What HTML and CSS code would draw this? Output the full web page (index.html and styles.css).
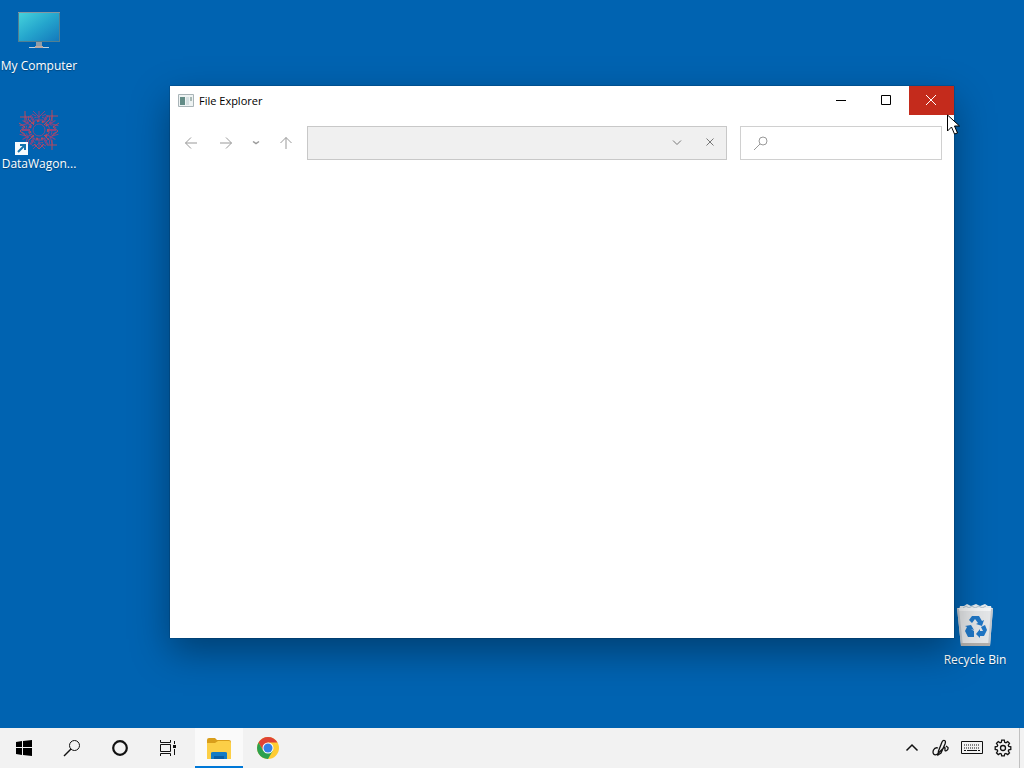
FILE: index.html
```html
<!DOCTYPE html>
<html lang="en">
<head>
<meta charset="utf-8">
<title>File Explorer</title>
<link rel="stylesheet" href="styles.css">
</head>
<body>
<main class="desktop">
  <button class="shortcut shortcut-computer">
    <svg width="48" height="48" viewBox="0 0 48 48">
      <defs><linearGradient id="screen" x1="0" y1="0" x2="1" y2="1"><stop offset="0" stop-color="#45d2dc"/><stop offset=".5" stop-color="#25a6cd"/><stop offset="1" stop-color="#1479bc"/></linearGradient></defs>
      <path d="M3 4h42v30H3z" fill="#527f91"/>
      <path d="M4 5h40v28H4z" fill="url(#screen)"/>
      <path d="M3 4h42v1H3z" fill="#8797a0"/>
      <path d="M21 34h6v5h-6z" fill="#8f9da8"/>
      <path d="M14 39h20v1H14z" fill="#c2d3df"/><path d="M20 38h8v2h-8z" fill="#bda9a1"/>
    </svg>
    <span class="shortcut-label">My Computer</span>
  </button>
  <button class="shortcut shortcut-wagon">
    <svg width="48" height="48" viewBox="0 0 48 48">
      <defs>
        <g id="spoke"><path d="M24 16V5M20 16l-4-7M28 16l4-7M24 11l6-6M24 11l-6-6M20 14h8M17 8l4 2M31 8l-4 2"/></g>
      </defs>
      <g fill="none" stroke="#8a4580" stroke-width="1">
        <circle cx="24" cy="24" r="6"/><circle cx="24" cy="24" r="13" stroke-dasharray="5 3"/>
        <use href="#spoke"/><use href="#spoke" transform="rotate(60 24 24)"/><use href="#spoke" transform="rotate(120 24 24)"/><use href="#spoke" transform="rotate(180 24 24)"/><use href="#spoke" transform="rotate(240 24 24)"/><use href="#spoke" transform="rotate(300 24 24)"/>
      </g>
      <g fill="none" stroke="#b64a5c">
        <path d="M5 11h11M10 5v11M32 10h11M37 4v11M4 17l6 4-5 4 6 5M44 17l-6 4 5 4-6 5M32 39h10M37 34v10M13 13l6 6M35 13l-6 6M14 34l5-5M34 34l-5-5M19 38l5 5 5-5"/>
        <circle cx="24" cy="24" r="9" stroke-width="2" stroke-dasharray="2 3"/>
      </g>
      <path d="M0 36h13v13H0z" fill="#f7fbfd"/>
      <path d="M3 46l6-6M5 39h5v5" fill="none" stroke="#1675ae" stroke-width="2"/>
    </svg>
    <span class="shortcut-label">DataWagon...</span>
  </button>
  <button class="shortcut shortcut-bin">
    <svg width="48" height="48" viewBox="0 0 48 48">
      <path d="M8 8l1-4 4 0 3-2 4 2 5-2 4 2 5-2 3 2 3 0 1 4z" fill="#e7edf1"/>
      <path d="M12 6l3-2 3 2 3-2 3 2 4-2 3 2 4-2" fill="none" stroke="#b4c2cc"/>
      <path d="M6 6h36l-3 38H10z" fill="#e5e7e9"/>
      <path d="M7 6h34l-1 3H8z" fill="#f5f6f7"/>
      <path d="M6 6l2 1 4 37h-2zM42 6l-2 1-3 37h2z" fill="#c3c8ce"/>
      <path d="M10 41h29v3H10z" fill="#b3b0ad"/>
      <g fill="#2077c6">
        <path d="M18 18l3-4h7l3 5 2-1-2 6-6-2 2-1-3-4-3 4z"/>
        <path d="M30 25l4-2 2 5-3 6h-4v2l-4-4 4-5v2h3z"/>
        <path d="M23 29v6h-6l-3-6 2-4-2-1 6-1 3 5-3-1z"/>
      </g>
    </svg>
    <span class="shortcut-label">Recycle Bin</span>
  </button>

  <section class="window" aria-label="File Explorer">
    <header class="titlebar">
      <svg width="16" height="14" viewBox="0 0 16 14"><path d="M.5.5h15v12H.5z" fill="#eef3f3" stroke="#a9b4b8"/><path d="M2 3h5v8H2z" fill="#628b86"/><path d="M8 3h3v8H8z" fill="#d5e0e2"/><path d="M12 3h2v4h-2z" fill="#a9b9b6"/></svg>
      <h1 class="title">File Explorer</h1>
      <button class="caption" aria-label="Minimize"><svg width="12" height="12" viewBox="0 0 12 12"><path d="M1 6.500h10"/></svg></button>
      <button class="caption" aria-label="Maximize"><svg width="12" height="12" viewBox="0 0 12 12"><path d="M1.500 1.500h9v9h-9z"/></svg></button>
      <button class="caption caption-close" aria-label="Close"><svg width="12" height="12" viewBox="0 0 12 12"><path d="M1 1l10 10M11 1L1 11"/></svg></button>
    </header>
    <div class="toolbar">
      <nav class="history">
        <button class="tool" aria-label="Back"><svg width="14" height="14" viewBox="0 0 14 14"><path d="M13 7H1.500M7 1.500L1.500 7L7 12.500"/></svg></button>
        <button class="tool" aria-label="Forward"><svg width="14" height="14" viewBox="0 0 14 14"><path d="M1 7h11.500M7 1.500L12.500 7L7 12.500"/></svg></button>
        <button class="tool tool-small" aria-label="Recent locations"><svg width="8" height="8" viewBox="0 0 8 8"><path d="M1 2.500l3 2 3-2" stroke-width="1.500"/></svg></button>
        <button class="tool" aria-label="Up"><svg width="14" height="14" viewBox="0 0 14 14"><path d="M7 13V1.500M1.500 7L7 1.500L12.500 7"/></svg></button>
      </nav>
      <div class="field address">
        <input class="entry" type="text" aria-label="Address">
        <button class="field-button" aria-label="Previous locations"><svg width="10" height="10" viewBox="0 0 10 10"><path d="M1 2.500l4 4 4-4"/></svg></button>
        <button class="field-button" aria-label="Clear address"><svg width="10" height="10" viewBox="0 0 10 10"><path d="M1.500.5l7 7M8.500.5l-7 7"/></svg></button>
      </div>
      <label class="field search">
        <svg width="16" height="16" viewBox="0 0 16 16"><circle cx="10" cy="6" r="4"/><path d="M7 9l-6 6"/></svg>
        <input class="entry" type="text" aria-label="Search">
      </label>
    </div>
    <div class="content"></div>
  </section>
  <svg class="cursor" width="13" height="21" viewBox="0 0 13 21"><path d="M.5 1v16l4-4 3 7 3-1-3-7h5z" fill="#fff" stroke="#000"/></svg>
</main>

<footer class="taskbar">
  <button class="task" aria-label="Start"><svg width="16" height="16" viewBox="0 0 16 16"><path d="M0 2l6-1v6H0zM7 1l9-1v7H7zM0 8h6v7l-6-1zM7 8h9v8l-9-1z"/></svg></button>
  <button class="task" aria-label="Search"><svg class="line" width="18" height="18" viewBox="0 0 18 18"><circle cx="11.500" cy="6.500" r="5"/><path d="M8 10l-7 7" stroke-width="1.500"/></svg></button>
  <button class="task" aria-label="Assistant"><svg class="line" width="18" height="18" viewBox="0 0 18 18"><circle cx="9" cy="9" r="6.800" stroke-width="2.200"/></svg></button>
  <button class="task" aria-label="Task view"><svg class="line" width="18" height="16" viewBox="0 0 18 16"><path d="M1.500 0v2.500h10V0M1.500 4.500h10v7h-10zM1.500 16v-2.500h10V16M15.500 1v3M15.500 9v6"/><path d="M14 5h3v3h-3z" fill="#111" stroke="none"/></svg></button>
  <button class="task task-active" aria-label="File Explorer">
    <svg width="26" height="24" viewBox="0 0 26 24"><path d="M1 4q0-2 2-2h6l2 2h12q2 0 2 2v3H1z" fill="#d99e1b"/><path d="M1 7h8l3-2h11q2 0 2 2v16H1z" fill="#fccf47"/><path d="M5 23v-6q0-1 2-1h12q2 0 2 1v6z" fill="#137bc5"/><path d="M8 20h10v3H8z" fill="#075da5"/></svg>
  </button>
  <button class="task task-chrome" aria-label="Chrome">
    <svg width="24" height="24" viewBox="0 0 24 24"><circle cx="12" cy="12" r="11" fill="#fc3"/><path d="M2.500 6.500A11 11 0 0 1 21.500 6.500H12L7.200 14.700z" fill="#df4336"/><path d="M2.500 6.500A11 11 0 0 0 12 23L16.800 14.700 7.200 14.700z" fill="#2ca04f"/><circle cx="12" cy="12" r="5.500" fill="#fff"/><circle cx="12" cy="12" r="4.500" fill="#347fe7"/></svg>
  </button>
  <div class="tray">
    <button class="tray-button" aria-label="Show hidden icons"><svg class="line" width="14" height="14" viewBox="0 0 14 14"><path d="M1.500 9.500L7 4l5.500 5.500" stroke-width="1.500"/></svg></button>
    <button class="tray-button" aria-label="Pen"><svg class="line" width="18" height="18" viewBox="0 0 18 18"><path d="M6.500 12L10 3q1-2 2.500-1.500T13 5L9 14l-3 2zM6 9q-3-1-4.500 2c-1.500 4 1 6 4 4l5-5q3-3 2.500 0c-.5 3 2 2 3 0V8.500L14 7" stroke-width="1.300"/></svg></button>
    <button class="tray-button tray-keyboard" aria-label="Touch keyboard"><svg class="line" width="24" height="14" viewBox="0 0 24 14"><path d="M1.500.5h21v12h-21z"/><path d="M4 4h16M4 7h16" stroke-dasharray="1 1"/><path d="M4 9.500h2M7 9.500h10M18 9.500h2"/></svg></button>
    <button class="tray-button" aria-label="Settings"><svg class="line" width="18" height="18" viewBox="0 0 18 18"><path d="M7.700 1.200h2.600l.4 2.100 1.200.5 1.800-1.200 1.800 1.800-1.200 1.800.5 1.200 2 .4v2.600l-2 .4-.5 1.200 1.200 1.800-1.800 1.800-1.800-1.200-1.200.5-.4 2H7.700l-.4-2-1.200-.5-1.800 1.200-1.800-1.800 1.200-1.800-.5-1.200-2-.4V7.800l2-.4.5-1.200-1.200-1.800 1.800-1.800 1.800 1.200 1.200-.5z" stroke-width="1.300"/><circle cx="9" cy="9" r="2.500" stroke-width="1.300"/></svg></button>
  </div>
  <button class="show-desktop" aria-label="Show desktop"></button>
</footer>
</body>
</html>
```
FILE: styles.css
```css
* { box-sizing: border-box; }

body {
  margin: 0;
  min-height: 100vh;
  display: flex;
  flex-direction: column;
  background: #0063b1;
  font-family: "Open Sans", "Noto Sans", sans-serif;
  font-size: 12px;
}

button {
  display: flex;
  align-items: center;
  justify-content: center;
  padding: 0;
  border: 0;
  background: none;
  font: inherit;
}

svg { display: block; flex: none; }

.desktop {
  position: relative;
  flex: 1;
  overflow: hidden;
}

.shortcut {
  position: absolute;
  width: 78px;
  flex-direction: column;
  gap: 2px;
  color: #fff;
}

.shortcut svg { overflow: visible; }

.shortcut-label {
  line-height: 16px;
  white-space: nowrap;
  text-shadow: 0 1px 1px rgba(0, 0, 0, 0.3);
}

.shortcut-computer { top: 8px; left: 0; }
.shortcut-wagon { top: 106px; left: 0; }
.shortcut-bin { right: 10px; bottom: 60px; }

.window {
  position: absolute;
  inset: 86px 70px 90px 170px;
  display: flex;
  flex-direction: column;
  background: #fff;
  box-shadow: 0 0 1px rgba(0, 0, 0, 0.7), 0 14px 36px rgba(0, 0, 0, 0.36);
}

.titlebar {
  height: 29px;
  display: flex;
  align-items: center;
  padding-left: 8px;
}

.title {
  flex: 1;
  margin: 0 0 0 5px;
  font-size: 11px;
  font-weight: 400;
  line-height: 16px;
  color: #000;
}

.caption {
  width: 45px;
  height: 29px;
  padding: 0 2px 1px 0;
}

.caption svg {
  fill: none;
  stroke: #000;
}

.caption-close { background: #c42b1c; }
.caption-close svg { stroke: #fff; }

.toolbar {
  display: flex;
  align-items: center;
  padding: 11px 12px 0 10px;
}

.history {
  display: flex;
  align-items: center;
  gap: 13px;
  margin-right: 10px;
}

.tool { width: 22px; height: 28px; }
.tool-small { width: 12px; }

.tool svg,
.field svg {
  fill: none;
  stroke: #999;
}

.field {
  height: 34px;
  display: flex;
  align-items: center;
  border: 1px solid #d0d0d0;
}

.address {
  flex: 1;
  margin-right: 13px;
  background: #f0f0f0;
  border-color: #c8c8c8;
}

.address svg { stroke: #777; }

.entry {
  flex: 1;
  min-width: 0;
  height: 100%;
  padding: 0 8px;
  border: 0;
  outline: 0;
  background: none;
  font: inherit;
}

.field-button { width: 33px; height: 32px; }

.search {
  width: 202px;
  padding-left: 12px;
}

.content { flex: 1; }

.cursor {
  position: absolute;
  top: 114px;
  right: 64px;
}

.taskbar {
  height: 40px;
  display: flex;
  background: #f2f2f2;
}

.line {
  fill: none;
  stroke: #111;
}

.task {
  width: 48px;
  height: 40px;
}

.task-active {
  margin-left: 3px;
  background: #fafafa;
  border-bottom: 2px solid #0078d7;
  padding-top: 2px;
}

.task-chrome { width: 50px; }

.tray {
  display: flex;
  align-items: center;
  margin-left: auto;
  gap: 5px;
}

.tray-button { width: 24px; height: 40px; }
.tray-keyboard { width: 28px; }

.show-desktop {
  width: 5px;
  margin-left: 4px;
  border-left: 1px solid #c0c0c0;
}
```
